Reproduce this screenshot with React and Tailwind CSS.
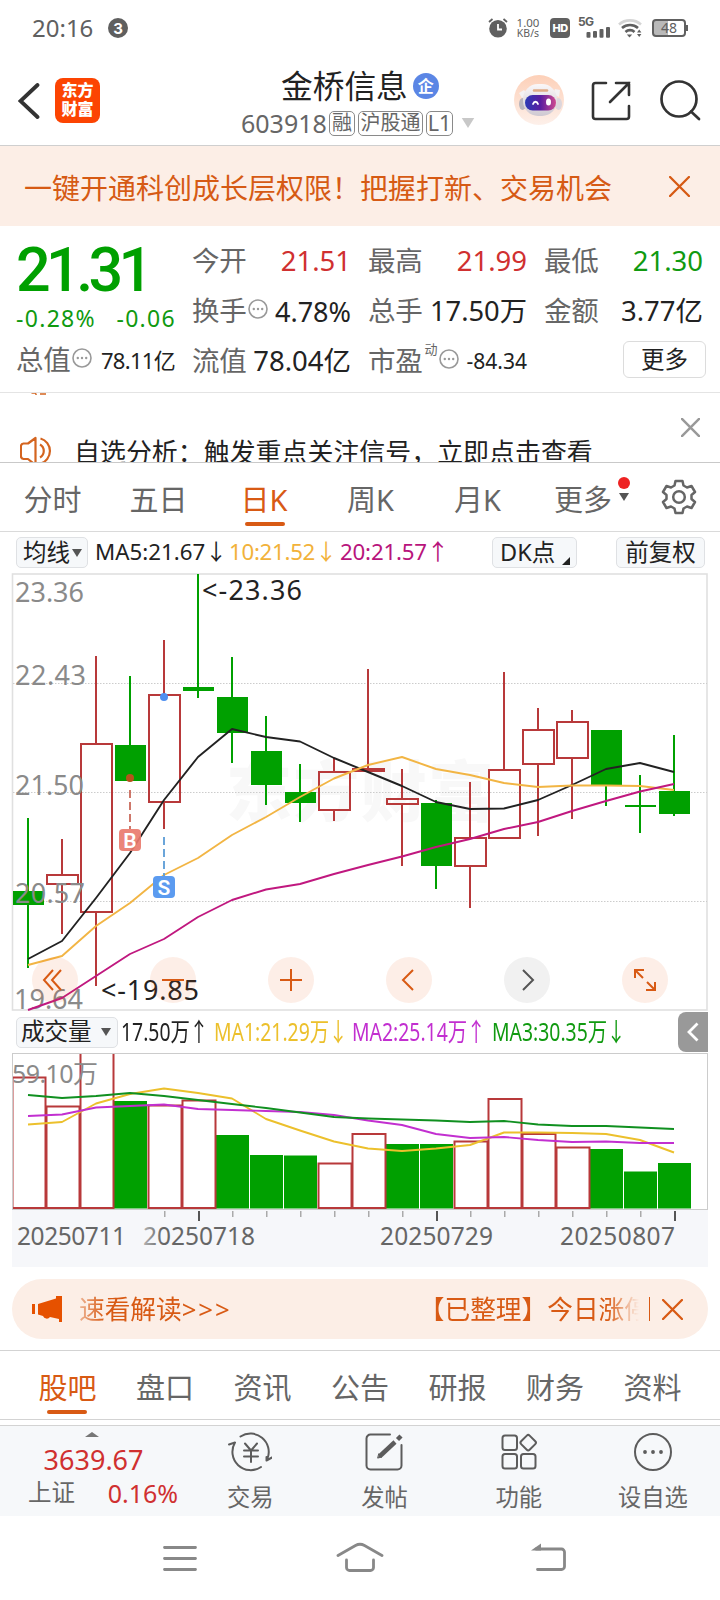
import React from "react";

const RED = "#b8393a";
const GREEN = "#00a000";

/* open/close body range, then the wick range; type: r = rising, g = falling, f = flat rising */
const candles = [
  ["g", 891, 905, 818, 968],
  ["r", 875, 884, 839, 934],
  ["r", 744, 912, 656, 986],
  ["g", 745, 781, 676, 781],
  ["r", 695, 802, 640, 829],
  ["g", 687, 691, 574, 698],
  ["g", 697, 733, 657, 763],
  ["g", 751, 785, 716, 805],
  ["g", 792, 803, 764, 822],
  ["r", 772, 810, 758, 821],
  ["f", 768, 772, 669, 770],
  ["r", 799, 804, 769, 866],
  ["g", 803, 866, 800, 889],
  ["r", 838, 866, 782, 908],
  ["r", 770, 838, 672, 770],
  ["r", 730, 764, 708, 836],
  ["r", 722, 758, 710, 819],
  ["g", 730, 785, 730, 806],
  ["g", 805, 807, 775, 833],
  ["g", 791, 814, 735, 816],
];
const ma5 = [959, 941, 898, 853, 800, 757, 729, 737, 741.5, 758, 772, 786, 802, 809, 808.5, 800, 785, 769, 763, 772];
const ma10 = [965, 956, 926, 903, 875, 858, 835, 817, 797, 778.5, 765, 757, 769, 775, 783, 787, 785.5, 785.5, 786, 790];
const ma20 = [1010, 998, 976, 954, 939, 917, 900, 889.5, 884, 874, 865, 856.5, 847, 839, 829, 822, 811, 801, 791.5, 784];

const volumes = [
  ["r", 1077.5], ["r", 1106.5], ["r", 1040], ["g", 1101], ["r", 1105.5], ["r", 1100.5], ["g", 1135],
  ["g", 1155], ["g", 1155.5], ["r", 1163.5], ["r", 1134], ["g", 1144], ["g", 1144], ["r", 1141.5],
  ["r", 1099], ["r", 1134], ["r", 1147.5], ["g", 1149], ["g", 1171.5], ["g", 1163],
];
const vma1 = [1124.5, 1122, 1103.5, 1094, 1088.5, 1093, 1098.5, 1119, 1130.5, 1141.5, 1148.5, 1151, 1148.5, 1145, 1132.5, 1132.5, 1133, 1134, 1140, 1152.5];
const vma2 = [1116, 1114.5, 1107.5, 1106, 1104.5, 1109, 1110, 1111, 1112, 1115, 1120.5, 1125, 1134, 1138, 1137, 1140, 1142, 1141.5, 1143, 1143];
const vma3 = [1095, 1098, 1096, 1093, 1096, 1100, 1104, 1108, 1112.5, 1117, 1118.5, 1119.5, 1120.5, 1122, 1121, 1124.5, 1126, 1126, 1127.5, 1129];

const cx = (i) => 28 + 34 * i;
const pts = (a) => a.map((y, i) => `${cx(i)},${y}`).join(" ");

function Line({ data, color }) {
  return <polyline points={pts(data)} fill="none" stroke={color} strokeWidth="1.9" strokeLinejoin="round" />;
}

function Close({ className, w = 2.2 }) {
  return (
    <svg viewBox="0 0 20 20" className={className} fill="none" stroke="currentColor" strokeWidth={w} strokeLinecap="round">
      <path d="M1 1 19 19M19 1 1 19" />
    </svg>
  );
}

function Info() {
  return (
    <svg viewBox="0 0 20 20" className="size-5 shrink-0 -translate-y-0.5">
      <circle cx="10" cy="10" r="9" fill="none" stroke="#999" strokeWidth="1.6" />
      <circle cx="5.8" cy="10" r="1.2" fill="#999" />
      <circle cx="10" cy="10" r="1.2" fill="#999" />
      <circle cx="14.2" cy="10" r="1.2" fill="#999" />
    </svg>
  );
}

function Caret({ className }) {
  return (
    <svg viewBox="0 0 10 8" className={className} fill="currentColor">
      <path d="M0 0H10L5 8Z" />
    </svg>
  );
}

function StatusBar() {
  return (
    <div className="flex h-14 items-center pl-8 text-[#606060]">
      <span className="w-[76px] text-2xl leading-none">20:16</span>
      <span className="flex size-5 items-center justify-center rounded-full bg-[#5f5f5f] font-['Inter'] text-[15px] leading-none font-bold text-white">3</span>
      <svg viewBox="0 0 20 20" className="ml-[360px] h-5 w-5" fill="none" stroke="currentColor">
        <circle cx="10" cy="10.8" r="8.8" fill="currentColor" stroke="none" />
        <path d="M1 4 4.5 1M19 4 15.5 1" strokeWidth="1.8" />
        <path d="M10 6v5.5h4" stroke="#fff" strokeWidth="1.8" />
      </svg>
      <div className="ml-1.5 flex w-7 flex-col items-center">
        <span className="text-[11.5px] leading-[11px]">1.00</span>
        <span className="text-[10.5px] leading-[11px] whitespace-nowrap">KB/s</span>
      </div>
      <span className="ml-2 flex h-5 w-5 items-center justify-center rounded bg-[#606060] font-['Inter'] text-[11px] leading-none font-extrabold tracking-tighter text-white">HD</span>
      <div className="relative ml-2 h-5 w-8">
        <span className="absolute -top-[2px] left-0 font-['Inter'] text-[12px] leading-none font-bold tracking-tighter">5G</span>
        <svg viewBox="0 0 32 20" className="h-5 w-8" fill="currentColor">
          <rect x="8.5" y="14" width="4" height="5.7" rx="1" />
          <rect x="15" y="13" width="4" height="6.7" rx="1" />
          <rect x="21.5" y="11" width="4" height="8.7" rx="1" />
          <rect x="28" y="9" width="4" height="10.7" rx="1" />
        </svg>
      </div>
      <svg viewBox="0 0 24 20" className="ml-2 h-5 w-6" fill="none" stroke="currentColor" strokeWidth="2.6">
        <path d="M1 6.5C7 1 17 1 23 6.5" stroke="#d5d5d5" />
        <path d="M4 10C8.500 6 15.500 6 20 10M7.500 14C10 11.500 14 11.500 16.500 14" />
        <path d="M8.800 16.500h5.400l-2.700 3z" fill="currentColor" stroke="none" />
        <path d="M19 14.500l2.200-3 2.200 3zM19 16l2.200 3 2.200-3z" fill="currentColor" stroke="none" />
      </svg>
      <div className="ml-2.5 flex h-[18px] w-[34px] items-center justify-center rounded border-2 border-[#606060] bg-[linear-gradient(90deg,#b9b9b9_46%,#fff_46%)] text-[14px] leading-none">48</div>
      <span className="h-1.5 w-0.5 bg-[#606060]" />
    </div>
  );
}

function Header() {
  return (
    <header className="flex h-[90px] border-b border-[#cfcfcf] pl-[18px]">
      <svg viewBox="0 0 22 36" className="mt-[27px] h-9 w-[22px]" fill="none" stroke="#333" strokeWidth="3.800" strokeLinecap="round">
        <path d="M19.500 2 2.500 18 19.500 34" />
      </svg>
      <div className="mt-[22px] ml-[15px] flex size-[45px] flex-col items-center justify-center rounded-lg bg-[#fc4402] text-base leading-[17px] font-black text-white">
        <span className="-mt-0.5">东方</span>
        <span className="mt-0.5">财富</span>
      </div>
      <div className="ml-[142px] flex w-60 flex-col">
        <div className="mt-[14px] ml-[39px] flex h-8 items-center">
          <span className="text-[31.700px] leading-none whitespace-nowrap text-[#222]">金桥信息</span>
          <span className="ml-[5px] flex size-[26px] shrink-0 items-center justify-center rounded-full bg-[#5b86e5] text-base leading-none font-bold text-white">企</span>
        </div>
        <div className="mt-[9px] -ml-px flex h-6 items-center text-[#666]">
          <span className="w-[88px] text-[25px] leading-none">603918</span>
          <span className="flex h-[25px] w-[26px] items-center justify-center rounded-[5px] border border-[#8a8a8a] text-[20px] leading-none">融</span>
          <span className="ml-[3px] flex h-[25px] w-[65px] items-center justify-center rounded-[5px] border border-[#8a8a8a] text-[20px] leading-none">沪股通</span>
          <span className="ml-[3px] flex h-[25px] w-[27px] items-center justify-center rounded-[5px] border border-[#8a8a8a] text-[21.500px] leading-none">L1</span>
          <Caret className="ml-[8px] h-2.5 w-3.5 text-[#c8c8c8]" />
        </div>
      </div>
      <svg viewBox="0 0 50 50" className="mt-[19px] ml-8 size-[50px]">
        <defs>
          <linearGradient id="halo" x1="0" y1="0" x2="0" y2="1">
            <stop offset="0" stopColor="#fdd0b8" />
            <stop offset="1" stopColor="#fdf0ea" />
          </linearGradient>
          <linearGradient id="visor" x1="0" y1="0" x2="1" y2="0">
            <stop offset="0" stopColor="#2a3ab5" />
            <stop offset="0.5" stopColor="#5a1ea0" />
            <stop offset="1" stopColor="#d04a90" />
          </linearGradient>
          <linearGradient id="shell" x1="0" y1="0" x2="0" y2="1">
            <stop offset="0" stopColor="#faf7f8" />
            <stop offset="1" stopColor="#cfc9d2" />
          </linearGradient>
        </defs>
        <circle cx="25" cy="25" r="25" fill="url(#halo)" />
        <ellipse cx="8.500" cy="29" rx="3.500" ry="6" fill="#b9b5bd" />
        <ellipse cx="44.500" cy="29" rx="3.500" ry="6" fill="#dcd6dc" />
        <path d="M5 18l5-3 3 4-5 4zM46 15l-5-1-2 5 6 3z" fill="#f4f1f3" />
        <rect x="9" y="9" width="34" height="32" rx="15" fill="url(#shell)" />
        <path d="M20 15.500h13" stroke="#e0ab86" strokeWidth="2.500" strokeLinecap="round" />
        <rect x="11" y="20" width="31" height="15.500" rx="7.700" fill="url(#visor)" />
        <path d="M19 29c1-3 4-3 5 0" stroke="#fff" strokeWidth="1.800" fill="none" strokeLinecap="round" />
        <ellipse cx="34.500" cy="27" rx="2.500" ry="3.500" fill="#fff" />
      </svg>
      <svg viewBox="0 0 40 40" className="mt-[25px] ml-[27px] size-10" fill="none" stroke="#333" strokeWidth="2.600" strokeLinecap="round" strokeLinejoin="round">
        <path d="M15 2H4.500A2.500 2.500 0 0 0 2 4.500v31A2.500 2.500 0 0 0 4.500 38h31a2.500 2.500 0 0 0 2.500-2.500V25" />
        <path d="M25 2H38V14M38 2 19 21" strokeLinejoin="miter" />
      </svg>
      <svg viewBox="0 0 42 42" className="mt-[24px] ml-[28px] size-[42px]" fill="none" stroke="#333" strokeWidth="2.700" strokeLinecap="round">
        <circle cx="20" cy="19" r="17.500" />
        <path d="M32 31.500 40 39" />
      </svg>
    </header>
  );
}

function Cell({ label, info, value, color = "text-[#222]", size = "text-[27px]", extra }) {
  return (
    <div className="flex items-center justify-between whitespace-nowrap">
      <div className="flex items-center gap-0.5 text-[27.500px] leading-none text-[#666]">
        <span className="-tracking-[0.300px]">{label}</span>
        {extra}
        {info && <Info />}
      </div>
      <span className={`${size} ${color} leading-none`}>{value}</span>
    </div>
  );
}

function Quote() {
  return (
    <section className="flex h-[167px] gap-[17px] border-b border-[#e4e4e4] px-[16px] text-[27px]">
      <div className="flex w-[159px] flex-col">
        <div className="mt-[14px] h-[60px] font-['Roboto'] text-[61px] leading-[60px] font-medium tracking-[-4.600px] text-[#00a000]">21.31</div>
        <div className="mt-[6px] flex h-6 items-center justify-between text-[23px] leading-none tracking-[1.300px] whitespace-nowrap text-[#109a10]">
          <span>-0.28%</span>
          <span className="-mr-px">-0.06</span>
        </div>
        <div className="mt-[14px] flex h-8 flex-col justify-center">
          <Cell label="总值" info value="78.11亿" size="text-[22px] tracking-[-0.700px]" />
        </div>
      </div>
      <div className="mt-[19px] grid h-[148px] grid-cols-[159px_159px_159px] grid-rows-[32px_32px_32px] gap-x-[17px] gap-y-[18px]">
        <Cell label="今开" value="21.51" color="text-[#d03030]" size="text-[27.500px]" />
        <Cell label="最高" value="21.99" color="text-[#d03030]" size="text-[27.500px]" />
        <Cell label="最低" value="21.30" color="text-[#109a10]" size="text-[27.500px]" />
        <Cell label="换手" info value="4.78%" />
        <Cell label="总手" value="17.50万" size="text-[27.300px]" />
        <Cell label="金额" value="3.77亿" size="text-[27.500px]" />
        <Cell label="流值" value="78.04亿" size="text-[27.500px]" />
        <Cell label="市盈" info value="-84.34" size="text-[21px]" extra={<span className="-mt-6 text-[13px] leading-none">动</span>} />
        <button className="-mt-[4px] -mr-[3px] ml-auto h-[37px] w-[83px] rounded-md border border-[#dcdcdc] text-[23.500px] leading-none text-[#222]">更多</button>
      </div>
    </section>
  );
}

function Ticker() {
  return (
    <section className="flex h-[70px] overflow-hidden border-b border-[#c9c9c9] pl-5">
      <div className="w-[54px]">
        <svg viewBox="0 0 34 70" className="h-[70px] w-[34px]" fill="none" stroke="#d4641f" strokeWidth="2.200" strokeLinejoin="round">
          <path d="M11.500 0h4.500M16 .5V2M20 1h6" strokeWidth="1.500" />
          <path d="M15.500 45v27L8 66H3.500A3 3 0 0 1 .900 63V53A3 3 0 0 1 3.500 50.500H8L15.500 45Z" />
          <path d="M20 51.500a7.500 7.500 0 0 1 0 13M20.500 45.500a13 13 0 0 1 0 25" />
        </svg>
      </div>
      <p className="mt-[46px] w-[607px] text-[25.950px] leading-[26px] whitespace-nowrap text-[#222]">自选分析：触发重点关注信号，立即点击查看</p>
      <Close className="mt-[25px] size-[19px] text-[#999]" w={2.6} />
    </section>
  );
}

function PeriodTabs() {
  return (
    <nav className="flex h-[69px] border-b border-[#dadada] text-[29px] leading-none text-[#666]">
      <span className="mt-[22px] ml-[23.500px] w-[106px]">分时</span>
      <span className="mt-[22px] w-[111px]">五日</span>
      <div className="mt-[22px] w-[106.500px] text-[#d85a14]">
        <div className="h-[37px]">日K</div>
        <div className="ml-[4px] h-1 w-10 rounded-full bg-[#d85a14]" />
      </div>
      <span className="mt-[22px] w-[107px]">周K</span>
      <span className="mt-[22px] w-[100px]">月K</span>
      <span className="mt-[22px] w-[58px]">更多</span>
      <div className="mt-[14px] flex w-6 flex-col items-center">
        <span className="size-3 rounded-full bg-[#ee2222]" />
        <Caret className="mt-[4px] h-2 w-2.5 text-[#555]" />
      </div>
      <svg viewBox="0 0 36 36" className="mt-[16px] ml-[25px] size-9" fill="none" stroke="#666" strokeWidth="2.500" strokeLinejoin="round">
        <path d="M14.500 2h7l1 4.500 3.500 2 4.500-1.500 3.500 6-3.500 3v4l3.500 3-3.500 6-4.500-1.500-3.500 2-1 4.500h-7l-1-4.500-3.500-2L5.500 29 2 23l3.500-3v-4L2 13l3.500-6L10 8.500l3.500-2Z" />
        <circle cx="18" cy="18" r="5.800" />
      </svg>
    </nav>
  );
}

function Arrow({ up }) {
  return <span className="flex w-[22px] justify-center">{up ? "↑" : "↓"}</span>;
}

const chip = "flex h-[31px] items-center rounded-[5px] border border-[#dfe1e4] bg-[#f6f8fa] text-[23.500px] leading-none text-[#222]";

function MaRow() {
  return (
    <div className="flex h-[41px] items-center pl-4 text-[22.300px] leading-none whitespace-nowrap">
      <button className={`${chip} w-[72px] pl-1.5`}>
        均线
        <Caret className="ml-[2px] h-2 w-2.5 text-[#555]" />
      </button>
      <div className="ml-[7px] flex w-[134px] text-[#222]">MA5:21.67<Arrow /></div>
      <div className="flex w-[111px] tracking-[-0.300px] text-[#f2b23a]">10:21.52<Arrow /></div>
      <div className="flex w-[152px] tracking-[-0.200px] text-[#b8147c]">20:21.57<Arrow up /></div>
      <button className={`${chip} w-[85px] pl-[7px]`}>
        DK点
        <svg viewBox="0 0 8 8" className="mt-4 ml-[7px] size-2 shrink-0"><path d="M8 0V8H0Z" fill="#222" /></svg>
      </button>
      <button className={`${chip} ml-[39px] w-[89px] justify-center`}>前复权</button>
    </div>
  );
}

const controls = [
  ["M21 13 12 23 21 33M29 13 20 23 29 33", "bg-[#f05a14]/10 text-[#d85a14]"],
  ["M12 23H34", "bg-[#f05a14]/10 text-[#d85a14]"],
  ["M12 23H34M23 12V34", "bg-[#f05a14]/10 text-[#d85a14]"],
  ["M27 13 17 23 27 33", "bg-[#f05a14]/10 text-[#d85a14]"],
  ["M19 13 29 23 19 33", "bg-[#f1f1f1] text-[#555]"],
  ["M21 21 13 13M13 21V13H22M25 25 33 33M33 25V33H24", "bg-[#f05a14]/10 text-[#d85a14]"],
];

function PriceChart() {
  return (
    <div className="relative h-[438px]">
      <svg viewBox="0 573 720 438" className="h-[438px] w-[720px]">
        <text x="226" y="816" fontSize="66" fontWeight="900" fill="#f8f8f8" textLength="268">东方财富</text>
        <rect x="12.500" y="574" width="694.500" height="436" fill="none" stroke="#e0e0e0" strokeWidth="1.600" />
        {[683.5, 792.5, 901.5].map((y) => (
          <path key={y} d={`M13 ${y}H707`} stroke="#ccc" strokeDasharray="1.500 1.500" />
        ))}
        {candles.map(([t, a, b, hi, lo], i) => {
          const c = cx(i);
          if (t === "g")
            return (
              <g key={i} fill={GREEN}>
                <rect x={c - 1} y={hi} width="2" height={lo - hi} />
                <rect x={c - 15} y={a} width="31" height={b - a} />
              </g>
            );
          if (t === "f")
            return (
              <g key={i} fill={RED}>
                <rect x={c - 1} y={hi} width="2" height={lo - hi} />
                <rect x={c - 16} y={a} width="33" height={b - a} />
              </g>
            );
          return (
            <g key={i} fill={RED}>
              {a > hi && <rect x={c - 1} y={hi} width="2" height={a - hi} />}
              {lo > b && <rect x={c - 1} y={b} width="2" height={lo - b} />}
              <rect x={c - 15} y={a} width="31" height={b - a} fill="none" stroke={RED} strokeWidth="2" />
            </g>
          );
        })}
        <g fontSize="27" fill="#8a8a8a">
          <text x="15" y="601.500" textLength="69">23.36</text>
          <text x="15" y="684.500" textLength="71">22.43</text>
          <text x="15" y="794.500" textLength="69">21.50</text>
          <text x="15" y="903" textLength="70">20.57</text>
          <text x="14" y="1008.500" textLength="69">19.64</text>
        </g>
        <Line data={ma5} color="#222" />
        <Line data={ma10} color="#f2b544" />
        <Line data={ma20} color="#c0187f" />
        <g fontSize="27" fill="#222">
          <text x="202" y="599.500" textLength="100">&lt;-23.36</text>
          <text x="101" y="999.500" textLength="98">&lt;-19.85</text>
        </g>
        <path d="M130 790V829" stroke="#c9695a" strokeWidth="1.800" strokeDasharray="8 4" />
        <circle cx="130" cy="778" r="4" fill="#b5521b" />
        <path d="M164 837V876" stroke="#5b9cd6" strokeWidth="1.800" strokeDasharray="8 4" />
        <circle cx="164" cy="697" r="4" fill="#4f8ff0" />
        <rect x="119" y="829" width="22" height="22" rx="4" fill="#e97b6e" fillOpacity="0.920" />
        <rect x="153" y="876" width="22" height="22" rx="4" fill="#5b9bf0" />
        <g fontSize="21" fontWeight="600" fill="#fff" textAnchor="middle" fontFamily="Roboto">
          <text x="130" y="847.500">B</text>
          <text x="164" y="894.500">S</text>
        </g>
      </svg>
      <div className="absolute top-[384px] left-8 flex gap-[72px]">
        {controls.map(([d, cls], i) => (
          <button key={i} className={`size-[46px] rounded-full ${cls}`}>
            <svg viewBox="0 0 46 46" className="size-[46px]" fill="none" stroke="currentColor" strokeWidth="2"><path d={d} /></svg>
          </button>
        ))}
      </div>
    </div>
  );
}

function VolLabel({ children, up, cls }) {
  return (
    <div className={`shrink-0 ${cls}`}>
      <div className="flex w-max origin-left scale-x-[0.760]">{children}<span className="flex w-6 justify-center">{up ? "↑" : "↓"}</span></div>
    </div>
  );
}

function VolumeRow() {
  return (
    <div className="flex h-[42px] items-center pl-4 text-[25.500px] leading-none whitespace-nowrap">
      <button className={`${chip} w-[102px] pl-1`}>
        成交量
        <Caret className="ml-[9px] h-2 w-2.5 text-[#555]" />
      </button>
      <VolLabel up cls="ml-[3px] w-[93px] text-[#222]">17.50万</VolLabel>
      <VolLabel cls="w-[138px] text-[#ecc02c]">MA1:21.29万</VolLabel>
      <VolLabel up cls="w-[140px] text-[#c22fd0]">MA2:25.14万</VolLabel>
      <VolLabel cls="w-[186px] text-[#109a10]">MA3:30.35万</VolLabel>
      <button className="flex h-10 w-[30px] items-center justify-center rounded-l-lg bg-[#999]">
        <svg viewBox="0 0 12 20" className="h-5 w-3" fill="none" stroke="#fff" strokeWidth="2.800"><path d="M10.500 1.500 2 10l8.500 8.500" /></svg>
      </button>
    </div>
  );
}

function VolumeChart() {
  return (
    <svg viewBox="0 1053 720 215" className="h-[215px] w-[720px]">
      <defs>
        <clipPath id="vol"><rect x="13" y="1054" width="694" height="156" /></clipPath>
        <linearGradient id="fade" gradientUnits="userSpaceOnUse" x1="141" y1="0" x2="162" y2="0">
          <stop offset="0" stopColor="#bbb" />
          <stop offset="1" stopColor="#666" />
        </linearGradient>
      </defs>
      <rect x="12" y="1210" width="696" height="57" fill="#f6f7fa" />
      <rect x="12.500" y="1053.500" width="695" height="156" fill="#fff" stroke="#ccc" />
      <g clipPath="url(#vol)">
        {volumes.map(([t, y], i) =>
          t === "g" ? (
            <rect key={i} x={cx(i) - 16} y={y} width="33" height={1208.5 - y} fill={GREEN} />
          ) : null
        )}
        {volumes.map(([t, y], i) =>
          t === "r" ? (
            <rect key={i} x={cx(i) - 15.5} y={y} width="33" height={1208 - y} fill="none" stroke={RED} strokeWidth="2" />
          ) : null
        )}
      </g>
      <text x="12" y="1083" fontSize="25" fill="#8a8a8a" textLength="86">59.10万</text>
      <Line data={vma1} color="#ecc02c" />
      <Line data={vma2} color="#c22fd0" />
      <Line data={vma3} color="#109020" />
      {Array.from({ length: 16 }, (_, k) => {
        const big = k === 1 || k === 8 || k === 15;
        return <rect key={k} x={164 + 34 * k} y="1211" width={big ? 2 : 1.5} height={big ? 10 : 6} fill={big ? "#555" : "#aaa"} />;
      })}
      <g fontSize="24.500" fill="#666">
        <text x="17" y="1244.500" textLength="109">20250711</text>
        <text x="143" y="1244.500" textLength="112" fill="url(#fade)">20250718</text>
        <text x="380" y="1244.500" textLength="113">20250729</text>
        <text x="560" y="1244.500" textLength="115">20250807</text>
      </g>
    </svg>
  );
}

function Notice() {
  return (
    <div className="mx-3 mt-[11px] flex h-[60px] items-center rounded-full bg-[#fceee6] pl-5 text-[25.700px] leading-none whitespace-nowrap text-[#d85a14]">
      <svg viewBox="0 0 30 26" className="h-[26px] w-[30px]" fill="#e65100">
        <path d="M0 8h3v10H0zM6 8 24 2.500V0h6v26h-3v-3l-9-2a4 4 0 0 1-7-1L6 18.500Z" />
      </svg>
      <div className="ml-[17px] flex w-[560px] justify-between overflow-hidden pt-px mask-[linear-gradient(to_right,rgba(0,0,0,.4),black_26px,black_528px,transparent)]">
        <span className="flex">速看解读<span className="tracking-[1.900px]">&gt;&gt;&gt;</span></span>
        <span className="-mr-[11px]">【已整理】今日涨停</span>
      </div>
      <span className="ml-[10px] h-6 w-px bg-[#d85a14]" />
      <Close className="ml-3 size-[21px]" />
    </div>
  );
}

function SectionTabs() {
  return (
    <nav className="mt-[11px] flex h-[70px] border-y border-[#d3d3d3] pl-[18.700px] text-[29px] leading-none text-[#666]">
      {["股吧", "盘口", "资讯", "公告", "研报", "财务", "资料"].map((t, i) => (
        <div key={t} className={`flex w-[97.500px] flex-col items-center pt-[21.500px] ${i === 0 ? "text-[#d85a14]" : ""}`}>
          <span className="h-[37px]">{t}</span>
          {i === 0 && <span className="h-1 w-10 rounded-full bg-[#d85a14]" />}
        </div>
      ))}
    </nav>
  );
}

function Tool({ label, children }) {
  return (
    <div className="flex w-[134.500px] flex-col items-center">
      <svg viewBox="0 0 44 40" className="mt-[6px] h-10 w-11" fill="none" stroke="#5c5c5c" strokeWidth="2" strokeLinecap="round" strokeLinejoin="round">{children}</svg>
      <span className="mt-[14px] text-[23.300px] leading-none text-[#666]">{label}</span>
    </div>
  );
}

function BottomBar() {
  return (
    <div className="mt-[5px] flex h-[91px] border-t border-[#d3d3d3] bg-[#f6f8fa]">
      <div className="flex w-[183.500px] flex-col items-center pt-1.5">
        <svg viewBox="0 0 14 5" className="h-[5px] w-3.5"><path d="M0 5 7 0l7 5Z" fill="#777" /></svg>
        <span className="mt-[8.500px] ml-1 text-[27px] leading-none text-[#d03030]">3639.67</span>
        <div className="mt-[8px] flex w-full items-center justify-between pr-[5px] pl-7">
          <span className="text-[23.500px] leading-none text-[#666]">上证</span>
          <span className="text-[25px] leading-none text-[#d03030]">0.16%</span>
        </div>
      </div>
      <Tool label="交易">
        <path d="M12.500 4.500a18.300 18.300 0 0 1 27 22M33 35A18.300 18.300 0 0 1 7 10.500L1 12.500M44 25.500 38.500 28.500V25" />
        <path d="M17 11.500l6 7 6-7M16 18.500h14M16 24.500h14M23 18.500V30" />
      </Tool>
      <Tool label="发帖">
        <path d="M28 2.500H8.500a4 4 0 0 0-4 4v27a4 4 0 0 0 4 4h27a4 4 0 0 0 4-4V13" />
        <path d="M18 24 33 10" strokeWidth="4.500" strokeLinecap="butt" />
        <path d="M16 26l4-1-3-3Z" fill="#5c5c5c" strokeWidth="1" />
        <path d="M35.500 7.500 39 4" strokeWidth="4.500" strokeLinecap="butt" />
      </Tool>
      <Tool label="功能">
        <rect x="5.500" y="3.500" width="14.500" height="14.500" rx="2.500" />
        <rect x="5.500" y="22" width="14.500" height="14.500" rx="2.500" />
        <rect x="24" y="22" width="14.500" height="14.500" rx="2.500" />
        <rect x="25.200" y="4.700" width="12" height="12" rx="2" transform="rotate(45 31.200 10.700)" />
      </Tool>
      <Tool label="设自选">
        <circle cx="22" cy="20" r="18" />
        <path d="M14 20h.01M22 20h.01M30 20h.01" strokeWidth="3.800" />
      </Tool>
    </div>
  );
}

function SystemNav() {
  return (
    <div className="flex h-[84px] pl-[163px] pt-[26px]">
      <svg viewBox="0 0 34 32" className="h-8 w-[34px]" stroke="#888" strokeWidth="2.800" strokeLinecap="round">
        <path d="M1.500 5.500H32.500M1.500 16.500H32.500M1.500 27.500H32.500" />
      </svg>
      <svg viewBox="0 0 48 32" className="ml-[139px] h-8 w-12" fill="none" stroke="#888" strokeWidth="2.800" strokeLinecap="round" strokeLinejoin="round">
        <path d="M2 13.500 19.500 3.500Q24 1 28.500 3.500L46 13.500M10.500 18v7.500a3 3 0 0 0 3 3h21a3 3 0 0 0 3-3V18" />
      </svg>
      <svg viewBox="0 0 36 32" className="ml-[147px] h-8 w-9" fill="none" stroke="#888" strokeWidth="2.800" strokeLinecap="round">
        <path d="M5 7H30.500a3 3 0 0 1 3 3V24.500a3 3 0 0 1-3 3H6.500" />
        <path d="M0 8.400 10 1.500V8.400Z" fill="#888" stroke="none" />
      </svg>
    </div>
  );
}

export default function App() {
  return (
    <main className="h-[1600px] w-[720px] overflow-hidden bg-white font-['Noto_Sans','Noto_Sans_CJK_SC',sans-serif]">
      <StatusBar />
      <Header />
      <div className="flex h-[80px] items-center bg-[#fceee6] pl-6 text-[#d65a14]">
        <p className="w-[645px] pt-[3px] text-[28px] leading-none whitespace-nowrap">一键开通科创成长层权限！把握打新、交易机会</p>
        <Close className="size-[21px]" />
      </div>
      <Quote />
      <Ticker />
      <PeriodTabs />
      <MaRow />
      <PriceChart />
      <VolumeRow />
      <VolumeChart />
      <Notice />
      <SectionTabs />
      <BottomBar />
      <SystemNav />
    </main>
  );
}
